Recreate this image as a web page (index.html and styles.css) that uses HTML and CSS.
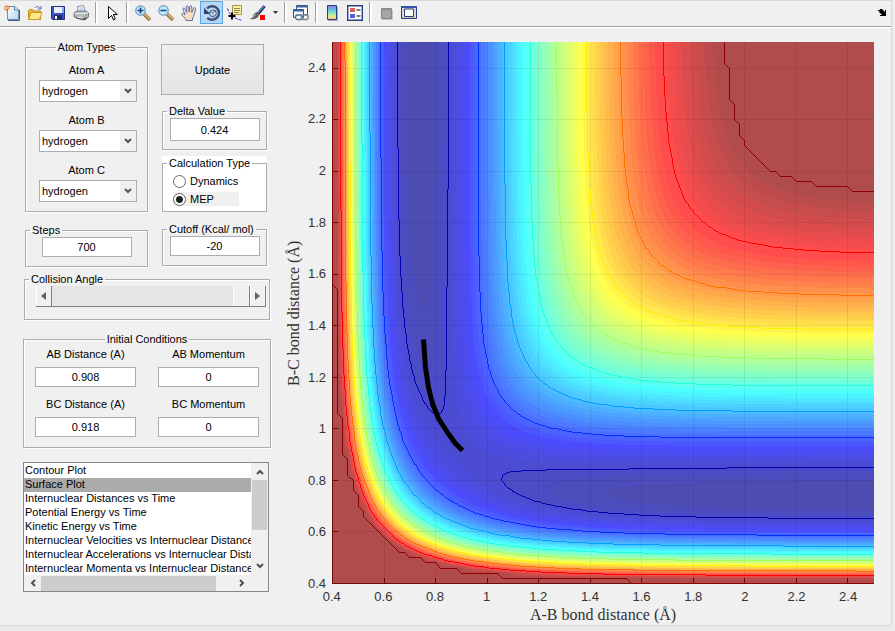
FILE: index.html
```html
<!DOCTYPE html>
<html lang="en">
<head>
<meta charset="utf-8">
<title>Reaction Dynamics</title>
<link rel="stylesheet" href="styles.css">
</head>
<body>
<div class="window">
  <header class="toolbar" role="toolbar" aria-label="Figure tools">
    <button class="tool" aria-label="New figure"><svg viewBox="0 0 16 16"><defs><linearGradient id="pg" x2="1" y2="1"><stop stop-color="#fff"/><stop offset="1" stop-color="#b9d3f0"/></linearGradient></defs><path d="M3.500 1.500h7l4 3v10h-11z" fill="url(#pg)" stroke="#7089b3"/><path d="M4 15.500h11.500V5" fill="none" stroke="#41598c"/><path d="M10.500 1.500v3.500h4" fill="#dbe8f8" stroke="#5d779f"/><path d="M2.500 0v6M0 3h6M.5 1l4 4M4.500 1l-4 4" stroke="#e4693c"/><circle cx="2.500" cy="3" r="1.300" fill="#ffd37a"/></svg></button>
    <button class="tool" aria-label="Open"><svg viewBox="0 0 16 16"><path d="M1.500 14.500v-9l1-1h3l1 1.500h7v8.500z" fill="#e8b83d" stroke="#c18e1a"/><path d="M1.500 14.500l2.500-7h11l-2.500 7z" fill="#ffe88a" stroke="#c99a22"/><path d="M8 3c1-2 4-2 5 .5M11 4h3V1" fill="none" stroke="#4b6fa8"/></svg></button>
    <button class="tool" aria-label="Save"><svg viewBox="0 0 16 16"><path d="M1.500 1.500h13v13h-12l-1-1z" fill="#3c50c8" stroke="#22307d"/><path d="M4 2h8v6H4z" fill="#e9effc"/><path d="M12 2h2v6h-2z" fill="#8fa5ea"/><path d="M4 10h8v4H4z" fill="#202a5c"/><path d="M5 11h2v3H5z" fill="#fff"/></svg></button>
    <button class="tool" aria-label="Print"><svg viewBox="0 0 16 16"><path d="M5 7L4.500 1.500l6-1 2 6.500z" fill="#fff" stroke="#8392ae"/><path d="M6 3h4M6.500 5h4" stroke="#9db2d8"/><path d="M1 8l3-2h9l2.500 2v4L11 14.500 1 12z" fill="#b7b9bd" stroke="#747880"/><path d="M1.500 8.500h9l4.500-.5" stroke="#ececec" fill="none"/><path d="M3 11.500l8 1.500 3-1v2l-3 1.500-8-2z" fill="#5b5e66"/><path d="M4 12l6 1.200" stroke="#fff"/><path d="M12 10h2" stroke="#63b14b"/></svg></button>
    <span class="sep"></span>
    <button class="tool" aria-label="Edit plot"><svg viewBox="0 0 16 16"><path d="M4.500 1.500v12l3-3 2 4.500 1.800-1-2-4.500h4z" fill="#fff" stroke="#000"/></svg></button>
    <span class="sep"></span>
    <button class="tool" aria-label="Zoom in"><svg viewBox="0 0 16 16"><path d="M9 9l6 6" stroke="#8a6a45" stroke-width="3.500"/><path d="M9.500 9l5.500 5.500" stroke="#f0b45c" stroke-width="1.600"/><circle cx="5.500" cy="5.500" r="4.700" fill="#c4eefc" stroke="#7aa7cf" stroke-width="1.500"/><path d="M5.500 2.500v6M2.500 5.500h6" stroke="#173d86" stroke-width="1.600"/></svg></button>
    <button class="tool" aria-label="Zoom out"><svg viewBox="0 0 16 16"><path d="M9 9l6 6" stroke="#8a6a45" stroke-width="3.500"/><path d="M9.500 9l5.500 5.500" stroke="#f0b45c" stroke-width="1.600"/><circle cx="5.500" cy="5.500" r="4.700" fill="#c4eefc" stroke="#7aa7cf" stroke-width="1.500"/><path d="M2.500 5.500h6" stroke="#173d86" stroke-width="1.600"/></svg></button>
    <button class="tool" aria-label="Pan"><svg viewBox="0 0 16 16"><path d="M5 15.500c0-2-1.500-2.500-4.500-6 0-1.500 2-1.500 3.500.5L2 4c0-1.500 1.500-1.500 2 0l2 3.500L5.200 2c0-1.500 1.800-1.500 2.100 0L8.300 7l.4-5.200c.2-1.500 2-1.500 2.100 0L10.800 7.500l1.700-4c.5-1.500 2.300-1 2 .5-.6 3-1 5.500-2 7.500l-1 1.500v2.500z" fill="#fbdcc0" stroke="#4f6aa3" stroke-width=".9"/></svg></button>
    <button class="tool tool-on" aria-label="Rotate 3D" aria-pressed="true"><svg viewBox="0 0 18 18"><path d="M4 4.500A6.800 6.800 0 1 1 4.300 13.800" fill="none" stroke="#3a5078" stroke-width="2.400"/><path d="M1 4v6h6.500z" fill="#2f4268"/><path d="M7 7.500L10 6l3 1v4l-3 2-3-1.500z" fill="#e8f2fc" stroke="#3a5685"/><path d="M7 7.500l3 1 3-1.500M10 8.500V13" fill="none" stroke="#3a5685" stroke-width=".8"/></svg></button>
    <button class="tool" aria-label="Data cursor"><svg viewBox="0 0 16 16"><path d="M5.500.5h9v9h-9z" fill="#f7efa2" stroke="#a69442"/><path d="M7 3.500h6M7 5.500h6M7 7.500h5" stroke="#8c8252"/><path d="M.5 3.500c1 2 1 4 4 6.500 2 2 4 4 10 5" fill="none" stroke="#2534dd" stroke-dasharray="3 1"/><path d="M5 7.500v7M1.500 11h7" stroke="#000" stroke-width="2"/></svg></button>
    <button class="tool" aria-label="Brush"><svg viewBox="0 0 16 16"><path d="M14.500 1L8 9" stroke="#26366f" stroke-width="3"/><path d="M14 1L8 8" stroke="#8fa5da"/><path d="M9 8c-1-1-4-1-5 1s-2 4-4 5c3 1 8 0 9-4z" fill="#5f6065"/><path d="M2 13c2-1 2-3 4-4" stroke="#b8c2cf" fill="none"/><path d="M10 10h5v5h-5z" fill="#f00"/></svg></button>
    <button class="tool tool-caret" aria-label="Brush colours"><svg viewBox="0 0 5 3"><path d="M0 0h5L2.500 3z" fill="#333"/></svg></button>
    <span class="sep"></span>
    <button class="tool" aria-label="Link plot"><svg viewBox="0 0 16 16"><path d="M3.500.5h11v9h-11z" fill="#fff" stroke="#35517f"/><path d="M3 1.500h12" stroke="#3e63a5" stroke-width="2"/><path d="M.5 4.500h10v8H.5z" fill="#eef3fa" stroke="#35517f"/><path d="M0 5.500h11" stroke="#3e63a5" stroke-width="2"/><rect x="2.500" y="10" width="7.500" height="4.500" rx="2.200" fill="#fff" stroke="#4a6c87" stroke-width="1.300"/><rect x="8" y="10" width="7.300" height="4.500" rx="2.200" fill="none" stroke="#718a9d" stroke-width="1.300"/></svg></button>
    <span class="sep"></span>
    <button class="tool" aria-label="Colorbar"><svg viewBox="0 0 16 16"><defs><linearGradient id="cb" x2="0" y2="1"><stop stop-color="#8a7ad8"/><stop offset=".35" stop-color="#62c8ef"/><stop offset=".65" stop-color="#aef09e"/><stop offset=".85" stop-color="#f5e283"/><stop offset="1" stop-color="#f4a27c"/></linearGradient></defs><path d="M3.500.5h9v14h-9z" fill="url(#cb)" stroke="#27407f"/><path d="M4 15.500h9.500V2" fill="none" stroke="#aaa"/></svg></button>
    <button class="tool" aria-label="Legend"><svg viewBox="0 0 16 16"><path d="M.7.700h14.600v14.600H.7z" fill="#fff" stroke="#27407f" stroke-width="1.400"/><path d="M3 3h5v4H3z" fill="#e05b57"/><path d="M3 9h5v4H3z" fill="#5a5bdc"/><path d="M9.500 5h4M9.500 11h4" stroke="#000"/></svg></button>
    <span class="sep"></span>
    <button class="tool" aria-label="Hide plot tools"><svg viewBox="0 0 16 16"><path d="M4 14.500h10.500V5" fill="none" stroke="#c5c5c5"/><path d="M3.500 3.500h10v10h-10z" fill="#a6a6a6" stroke="#858585"/><path d="M4 5h9" stroke="#8b8b8b"/></svg></button>
    <button class="tool" aria-label="Show plot tools"><svg viewBox="0 0 16 16"><path d="M.5 1.500h15v12H.5z" fill="#dcdad0" stroke="#27407f"/><path d="M0 2h16" stroke="#3155a8" stroke-width="2"/><path d="M3.500 4h9v7.500h-9z" fill="#fff" stroke="#27407f"/><path d="M1 12.500h14" stroke="#b6b09a" stroke-dasharray="1 1"/></svg></button>
    <button class="tool dock" aria-label="Dock figure"><svg viewBox="0 0 8 7"><path d="M0 1h2v1H0zM2 0h2l3 3V1h1v6H2V6h2L1 3z" fill="#000"/></svg></button>
  </header>

  <main class="content">
    <form class="controls">
      <div class="columns">
        <div class="column">
          <fieldset class="group atoms">
            <legend class="legend-mid">Atom Types</legend>
            <label for="atomA">Atom A</label>
            <select id="atomA"><option>hydrogen</option></select>
            <label for="atomB">Atom B</label>
            <select id="atomB"><option>hydrogen</option></select>
            <label for="atomC">Atom C</label>
            <select id="atomC"><option>hydrogen</option></select>
          </fieldset>
          <fieldset class="group single">
            <legend><label for="steps">Steps</label></legend>
            <input id="steps" type="text" value="700">
          </fieldset>
        </div>
        <div class="column">
          <button type="button" class="update">Update</button>
          <fieldset class="group single delta">
            <legend><label for="delta">Delta Value</label></legend>
            <input id="delta" type="text" value="0.424">
          </fieldset>
          <div class="white">
            <fieldset class="group calc">
              <legend>Calculation Type</legend>
              <label class="choice"><input type="radio" name="calc">Dynamics</label>
              <label class="choice choice-on"><input type="radio" name="calc" checked>MEP</label>
            </fieldset>
          </div>
          <fieldset class="group single">
            <legend><label for="cutoff">Cutoff (Kcal/ mol)</label></legend>
            <input id="cutoff" type="text" value="-20">
          </fieldset>
        </div>
      </div>

      <fieldset class="group angle">
        <legend><label for="angle">Collision Angle</label></legend>
        <div class="slider">
          <button type="button" aria-label="Decrease"><svg viewBox="0 0 5 8"><path d="M5 0v8L0 4z" fill="#606060"/></svg></button>
          <input id="angle" type="range" min="0" max="180" value="180">
          <button type="button" aria-label="Increase"><svg viewBox="0 0 5 8"><path d="M0 0v8l5-4z" fill="#606060"/></svg></button>
        </div>
      </fieldset>

      <fieldset class="group initial">
        <legend class="legend-mid">Initial Conditions</legend>
        <div class="pairs">
          <div class="pair"><label for="abd">AB Distance (A)</label><input id="abd" type="text" value="0.908"></div>
          <div class="pair"><label for="abm">AB Momentum</label><input id="abm" type="text" value="0"></div>
          <div class="pair"><label for="bcd">BC Distance (A)</label><input id="bcd" type="text" value="0.918"></div>
          <div class="pair"><label for="bcm">BC Momentum</label><input id="bcm" type="text" value="0"></div>
        </div>
      </fieldset>

      <div class="listbox">
        <select size="8" aria-label="Plot type">
          <option>Contour Plot</option>
          <option selected>Surface Plot</option>
          <option>Internuclear Distances vs Time</option>
          <option>Potential Energy vs Time</option>
          <option>Kinetic Energy vs Time</option>
          <option>Internuclear Velocities vs Internuclear Distance</option>
          <option>Internuclear Accelerations vs Internuclear Distance</option>
          <option>Internuclear Momenta vs Internuclear Distance</option>
        </select>
        <div class="bar bar-v">
          <svg viewBox="0 0 8 6"><path d="M1 5l3-3 3 3" class="chev"/></svg>
          <span class="thumb"></span>
          <svg viewBox="0 0 8 6"><path d="M1 1l3 3 3-3" class="chev"/></svg>
        </div>
        <div class="bar bar-h">
          <svg viewBox="0 0 6 8"><path d="M5 1L2 4l3 3" class="chev"/></svg>
          <span class="thumb"></span>
          <svg viewBox="0 0 6 8"><path d="M1 1l3 3-3 3" class="chev"/></svg>
        </div>
      </div>
    </form>

    <section class="figure" aria-label="Potential energy surface">
      <div class="ylabel">B-C bond distance (Å)</div>
      <div class="yticks"><span>2.4</span><span>2.2</span><span>2</span><span>1.8</span><span>1.6</span><span>1.4</span><span>1.2</span><span>1</span><span>0.8</span><span>0.6</span><span>0.4</span></div>
      <canvas id="plot"></canvas>
      <div class="xticks"><span>0.4</span><span>0.6</span><span>0.8</span><span>1</span><span>1.2</span><span>1.4</span><span>1.6</span><span>1.8</span><span>2</span><span>2.2</span><span>2.4</span></div>
      <div class="xlabel">A-B bond distance (Å)</div>
    </section>
  </main>
</div>
<script src="plot.js"></script>
</body>
</html>
```
FILE: styles.css
```css
* { box-sizing: border-box; }

body {
  margin: 0;
  background: #ebebeb;
  color: #000;
  font: 11px/14px "Liberation Sans", Arial, sans-serif;
}

button, input, select { font: inherit; color: inherit; margin: 0; }

.window {
  display: flex;
  flex-direction: column;
  min-height: calc(100vh - 5px);
  margin-right: 3px;
  background: #f0f0f0;
  border: solid #d9d9d9;
  border-width: 1px 1px 1px 0;
}

/* toolbar */
.toolbar {
  display: flex;
  align-items: center;
  height: 26px;
  padding-bottom: 2px;
  border-bottom: 1px solid #a0a0a0;
  box-shadow: 0 1px 0 #fff;
}
.tool {
  display: flex;
  align-items: center;
  justify-content: center;
  width: 23px;
  height: 23px;
  padding: 0;
  border: 1px solid transparent;
  background: none;
}
.tool svg { width: 16px; height: 16px; flex: none; }
.tool-on { background: #b5d7f3; border-color: #5aa5e6; }
.tool-on svg { width: 18px; height: 18px; }
.tool-caret { width: 12px; }
.tool-caret svg { width: 5px; height: 3px; }
.sep { width: 8px; height: 21px; }
.sep::before {
  content: "";
  display: block;
  width: 2px;
  height: 100%;
  margin-left: 3px;
  border-left: 1px solid #a0a0a0;
  background: #fff;
}
.dock { margin-left: auto; width: 18px; }
.dock svg { width: 8px; height: 7px; }

/* layout */
.content { display: flex; flex: 1; }
.controls {
  width: 248px;
  flex: none;
  margin: 13px 0 33px 23px;
  display: flex;
  flex-direction: column;
}
.columns { display: flex; justify-content: space-between; padding: 0 4px 0 2px; }
.column { display: flex; flex-direction: column; }
.column:first-child { width: 123px; }
.column:last-child { width: 105px; }

.group {
  margin: 0;
  min-width: 0;
  padding: 0;
  border: 1px solid #acacac;
  box-shadow: 1px 1px 0 #fff, inset 1px 1px 0 #fff;
}
.group legend { margin-left: 4px; padding: 0 2px; height: 14px; }
.group .legend-mid { margin: 0 auto; padding: 0 2px; }

input[type="text"] {
  display: block;
  height: 20px;
  padding: 0;
  border: 1px solid #abadb3;
  border-radius: 0;
  background: #fff;
  text-align: center;
}

.atoms { height: 172px; margin-bottom: 11px; text-align: center; }
.atoms label { display: block; margin-top: 11px; }
.atoms select {
  width: 98px;
  height: 22px;
  margin: 3px 0 0 13px;
  padding: 0 2px;
  display: block;
  border: 1px solid #abadb3;
  border-radius: 0;
  appearance: none;
  background:
    url("data:image/svg+xml,%3Csvg xmlns='http://www.w3.org/2000/svg' width='8' height='6'%3E%3Cpath d='M1 1l3 3 3-3' fill='none' stroke='%23555' stroke-width='2'/%3E%3C/svg%3E") right 4px center no-repeat,
    linear-gradient(90deg, transparent calc(100% - 16px), #f0f0f0 0) #fff;
}
.atoms legend + label { margin-top: 9px; }

.single { height: 44px; }
.single input { width: 90px; margin: 0 auto; }
.delta { height: 46px; }
.delta input { height: 23px; }

.update {
  width: 103px;
  height: 51px;
  margin: 4px 0 9px -1px;
  border: 1px solid #acacac;
  background: linear-gradient(#efefef, #e4e4e4);
}
.white { background: #fff; margin: 6px 0 10px; }
.calc { height: 56px; padding-left: 10px; box-shadow: none; }
.calc legend { margin-left: -6px; background: #fff; }
.choice { display: flex; align-items: center; gap: 4px; width: 66px; height: 14px; margin: 4px 0; }
.choice-on { background: #f0f0f0; }
.choice input {
  appearance: none;
  flex: none;
  width: 13px;
  height: 13px;
  border: 1px solid #666;
  border-radius: 50%;
  background: #fff;
}
.choice input:checked { background: radial-gradient(circle, #222 3px, #fff 4px); }

.angle { height: 48px; margin: 5px 1px 0; }
.slider { display: flex; height: 21px; margin: 0 3px 0 11px; border-bottom: 1px solid #808080; }
.slider button {
  width: 16px;
  flex: none;
  padding: 0;
  border: 0;
  border-right: 1px solid #808080;
  background: #f0f0f0;
  box-shadow: inset 1px 0 0 #fff;
}
.slider button svg { width: 5px; height: 8px; display: block; margin: 0 auto; }
.slider input { flex: 1; min-width: 0; height: 20px; appearance: none; background: #e5e5e5; }
.slider input::-webkit-slider-thumb {
  appearance: none;
  width: 17px;
  height: 20px;
  background: #f0f0f0;
  border-right: 1px solid #808080;
  box-shadow: inset 1px 0 0 #fff;
}

.initial { height: 116px; margin-top: 12px; }
.pairs { display: grid; grid-template-columns: 101px 101px; gap: 10px 22px; margin: 1px 0 0 11px; }
.pair { text-align: center; }
.pair label { display: block; }
.pair input { width: 100%; margin-top: 6px; }

/* list */
.listbox {
  display: grid;
  grid-template: 112px 16px / 1fr 17px;
  width: 246px;
  margin-top: 14px;
  border: 1px solid #828790;
  background: #f0f0f0;
}
.listbox select {
  width: 100%;
  height: 112px;
  padding: 1px 0 0;
  border: 0;
  border-radius: 0;
  outline: 0;
  overflow: hidden;
  background: #fff;
}
.listbox option { padding: 0 1px; height: 14px; min-height: 14px; line-height: 14px; }
.listbox option:checked { background: #ababab linear-gradient(#ababab, #ababab); color: #000; }
.bar { display: flex; align-items: center; }
.bar svg { width: 8px; height: 8px; flex: none; }
.bar .thumb { background: #cdcdcd; }
.bar-v { flex-direction: column; padding: 5px 0; }
.bar-v .thumb { width: 15px; height: 50px; margin: 4px 0 auto; }
.bar-h { padding: 0 5px; }
.bar-h .thumb { width: 175px; height: 15px; margin: 0 auto 0 4px; }
.chev { fill: none; stroke: #505050; stroke-width: 2; }

/* figure */
.figure {
  flex: 1;
  min-width: 0;
  display: grid;
  grid-template: 1fr 26px 15px / 16px 24px 1fr;
  padding: 15px 17px 0 15px;
  color: #333;
  font-size: 13px;
}
.ylabel, .xlabel { font: 16px/16px "Liberation Serif", "Times New Roman", serif; white-space: nowrap; text-align: center; }
.ylabel { writing-mode: vertical-rl; transform: rotate(180deg); }
.yticks { display: flex; flex-direction: column; height: 104.762%; text-align: right; }
.yticks span { flex: 1; display: flex; align-items: center; justify-content: flex-end; }
.figure canvas { display: block; width: calc(100% - 6px); height: 100%; min-height: 0; margin-left: 6px; }
.xticks { grid-column: 3; display: flex; margin-left: calc(6px - 4.762%); text-align: center; line-height: 26px; }
.xticks span { flex: 1 1 0; min-width: 0; }
.xlabel { grid-column: 3; margin-left: 6px; line-height: 10px; }
```
FILE: plot.js
```js
(function () {
  var canvas = document.getElementById('plot');
  var D = 103.3, BETA = 1.97, RE = 0.7414, SATO = 0.424 * 0.424, CUTOFF = -20;
  var LEVELS = [-99.3, -90, -80, -70, -60, -50, -40, -30, -20];
  var MIN = 0.4, MAX = 2.5, STEP = 0.02, N = 106;

  // London-Eyring-Polanyi-Sato energy of a collinear A-B-C arrangement
  function terms(r) {
    var e = Math.exp(-BETA * (r - RE));
    var bound = D * (e * e - 2 * e) * (1 + SATO);
    var anti = D / 2 * (e * e + 2 * e) * (1 - SATO);
    return [(bound + anti) / 2, (bound - anti) / 2];
  }
  function energy(x, y) {
    var a = terms(x), b = terms(y), c = terms(x + y);
    var p = a[1] - b[1], q = b[1] - c[1], s = c[1] - a[1];
    return (a[0] + b[0] + c[0] - Math.sqrt((p * p + q * q + s * s) / 2)) / (1 + SATO);
  }

  var z = [], low = Infinity;
  for (var j = 0; j < N; j++) {
    z.push([]);
    for (var i = 0; i < N; i++) {
      var v = Math.min(CUTOFF, energy(MIN + i * STEP, MIN + j * STEP));
      z[j].push(v);
      if (v < low) low = v;
    }
  }

  function clamp(t) { return Math.max(0, Math.min(1, t)); }
  function jet(value) {
    var k = Math.min(63, Math.floor((value - low) / (CUTOFF - low) * 64));
    var t = (k + 1) / 64 * 4;
    return [clamp(Math.min(t - 1.5, 4.5625 - t)), clamp(Math.min(t - 0.5, 3.5 - t)), clamp(Math.min(t + 0.5, 2.5 - t))];
  }

  function draw() {
    var w = canvas.clientWidth, h = canvas.clientHeight;
    canvas.width = w;
    canvas.height = h;
    var g = canvas.getContext('2d');
    var sx = (w - 1) / (N - 1), sy = (h - 1) / (N - 1);
    var img = g.createImageData(w, h);
    for (var py = 0; py < h; py++) {
      var v = (h - 1 - py) / sy, r = Math.min(N - 2, Math.floor(v)), fv = v - r;
      for (var px = 0; px < w; px++) {
        var u = px / sx, c = Math.min(N - 2, Math.floor(u)), fu = u - c;
        var e = (z[r][c] * (1 - fu) + z[r][c + 1] * fu) * (1 - fv) + (z[r + 1][c] * (1 - fu) + z[r + 1][c + 1] * fu) * fv;
        var rgb = jet(e), o = (py * w + px) * 4;
        for (var m = 0; m < 3; m++) img.data[o + m] = 76 + rgb[m] * 179;
        img.data[o + 3] = 255;
      }
    }
    g.putImageData(img, 0, 0);

    function X(x) { return Math.round((x - MIN) / STEP * sx); }
    function Y(y) { return Math.round(h - 1 - (y - MIN) / STEP * sy); }

    // grid, ticks and axis lines
    for (var t = 0; t <= 10; t++) {
      var p = MIN + t * 0.2;
      g.fillStyle = 'rgba(0,0,0,0.07)';
      g.fillRect(X(p), 0, 1, h);
      g.fillRect(0, Y(p), w, 1);
      g.fillStyle = '#6e0c0c';
      g.fillRect(X(p), h - 6, 1, 6);
      g.fillRect(0, Y(p), 6, 1);
    }
    g.fillRect(0, 0, 1, h);
    g.fillRect(0, h - 1, w, 1);

    // single-pixel line, without smoothing
    function line(a, b) {
      var x0 = Math.round(a[0] * sx), y0 = Math.round(h - 1 - a[1] * sy);
      var x1 = Math.round(b[0] * sx), y1 = Math.round(h - 1 - b[1] * sy);
      var n = Math.max(Math.abs(x1 - x0), Math.abs(y1 - y0), 1);
      for (var s = 0; s <= n; s++) g.fillRect(Math.round(x0 + (x1 - x0) * s / n), Math.round(y0 + (y1 - y0) * s / n), 1, 1);
    }
    LEVELS.forEach(function (level) {
      var col = jet(level);
      g.fillStyle = 'rgb(' + col.map(function (q) { return Math.round(q * 255); }).join(',') + ')';
      for (var b = 0; b < N - 1; b++) {
        for (var a = 0; a < N - 1; a++) {
          var pts = [[a, b], [a + 1, b], [a + 1, b + 1], [a, b + 1]], cuts = [];
          for (var k = 0; k < 4; k++) {
            var P = pts[k], Q = pts[(k + 1) % 4];
            var zp = z[P[1]][P[0]], zq = z[Q[1]][Q[0]];
            if ((zp >= level) !== (zq >= level)) {
              var f = (level - zp) / (zq - zp);
              cuts.push([P[0] + (Q[0] - P[0]) * f, P[1] + (Q[1] - P[1]) * f]);
            }
          }
          for (var n = 0; n + 1 < cuts.length; n += 2) line(cuts[n], cuts[n + 1]);
        }
      }
    });

    // minimum energy path
    var path = [[0.754, 1.346], [0.762, 1.24], [0.774, 1.162], [0.789, 1.098], [0.813, 1.039], [0.845, 0.987], [0.877, 0.945], [0.903, 0.916]];
    g.beginPath();
    path.forEach(function (q) { g.lineTo(X(q[0]) + 0.5, Y(q[1]) + 0.5); });
    g.lineWidth = 5;
    g.lineJoin = 'round';
    g.strokeStyle = '#000';
    g.stroke();
  }

  draw();
  window.addEventListener('resize', draw);
})();
```
